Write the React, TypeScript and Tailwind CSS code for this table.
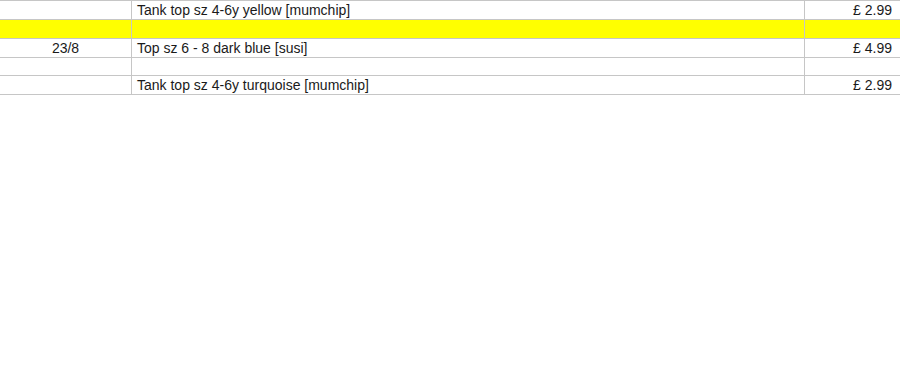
const rows = [
  { date: "", item: "Tank top sz 4-6y yellow [mumchip]", price: "£ 2.99", h: "h-[19px]", bg: "bg-white" },
  { date: "", item: "", price: "", h: "h-[19px]", bg: "bg-[#ffff00]" },
  { date: "23/8", item: "Top sz 6 - 8 dark blue [susi]", price: "£ 4.99", h: "h-[19px]", bg: "bg-white" },
  { date: "", item: "", price: "", h: "h-[18px]", bg: "bg-white" },
  { date: "", item: "Tank top sz 4-6y turquoise [mumchip]", price: "£ 2.99", h: "h-[19px]", bg: "bg-white" },
];

export default function App() {
  return (
    <div className="h-[384px] w-[900px] bg-white font-['Liberation_Sans',Arial,sans-serif] text-[14px] leading-none text-[#1a1a1a]">
      <div className="border-t border-[#c6c6c6]">
        {rows.map((row, i) => (
          <div
            key={i}
            className={`grid grid-cols-[132px_673px_95px] border-b border-[#c6c6c6] ${row.h} ${row.bg}`}
          >
            <div className="flex items-center justify-center border-r border-[#c6c6c6]">{row.date}</div>
            <div className="flex items-center border-r border-[#c6c6c6] pl-[5px]">{row.item}</div>
            <div className="flex items-center justify-end pr-[8px]">{row.price}</div>
          </div>
        ))}
      </div>
    </div>
  );
}
